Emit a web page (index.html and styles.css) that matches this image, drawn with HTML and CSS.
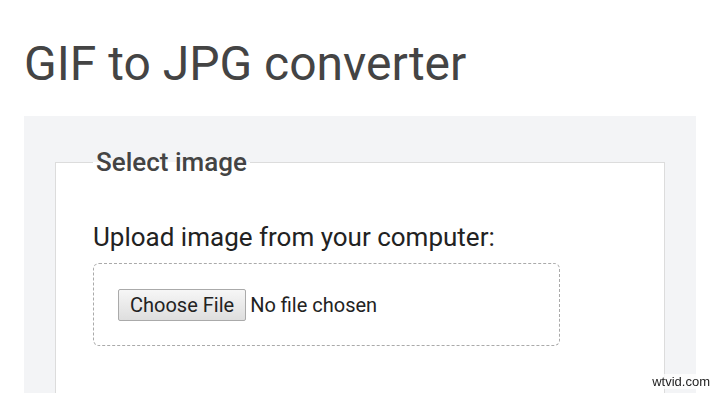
FILE: index.html
```html
<!DOCTYPE html>
<html>

<head>
    <meta charset="UTF-8">
    <title>GIF to JPG converter</title>
    <link rel="stylesheet" href="styles.css">
</head>

<body>
    <div class="container">
        <h1>GIF to JPG converter</h1>
        <div class="panel">
            <fieldset class="select-box">
                <legend>Select image</legend>
                <label class="upload-label" for="file-input">Upload image from your computer:</label>
                <div class="drop-zone">
                    <input type="file" id="file-input" accept="image/gif">
                </div>
            </fieldset>
        </div>
    </div>
    <div class="watermark">wtvid.com</div>
</body>

</html>
```

FILE: styles.css
```css
body {
    margin: 0;
    font-family: Roboto, "Liberation Sans", Arial, sans-serif;
    background: #fff;
    color: #222;
    height: 393px;
    overflow: hidden;
}

.container {
    padding: 0 24px;
}

h1 {
    margin: 0;
    padding-top: 34px;
    font-size: 48px;
    font-weight: 400;
    line-height: 60px;
    color: #444;
}

.panel {
    margin-top: 22px;
    padding: 31px 31px 40px;
    background: #f3f4f6;
}

.select-box {
    margin: 0;
    padding: 42px 37px 80px;
    border: 1px solid #dcdcdc;
    background: #fff;
}

.select-box legend {
    padding: 0 3px;
    font-size: 26px;
    font-weight: 500;
    color: #444;
}

.upload-label {
    display: block;
    font-size: 26px;
    line-height: 36px;
    color: #222;
}

.drop-zone {
    width: 467px;
    height: 83px;
    margin-top: 8px;
    padding-left: 24px;
    box-sizing: border-box;
    border: 1px dashed #aaa;
    border-radius: 6px;
    display: flex;
    align-items: center;
}

.drop-zone input {
    font-family: Roboto, "Liberation Sans", Arial, sans-serif;
    font-size: 20px;
    color: #222;
}

.drop-zone input::file-selector-button {
    font-family: inherit;
    font-size: 20px;
    padding: 3px 11px;
    margin-right: 4px;
    border: 1px solid #aaa;
    border-radius: 2px;
    background: linear-gradient(#f6f6f6, #dedede);
    color: #222;
}

.watermark {
    position: fixed;
    right: 10px;
    bottom: 4px;
    font-family: "Liberation Sans", Arial, sans-serif;
    font-size: 13px;
    color: #222;
    background: rgba(255, 255, 255, 0.7);
}
```
